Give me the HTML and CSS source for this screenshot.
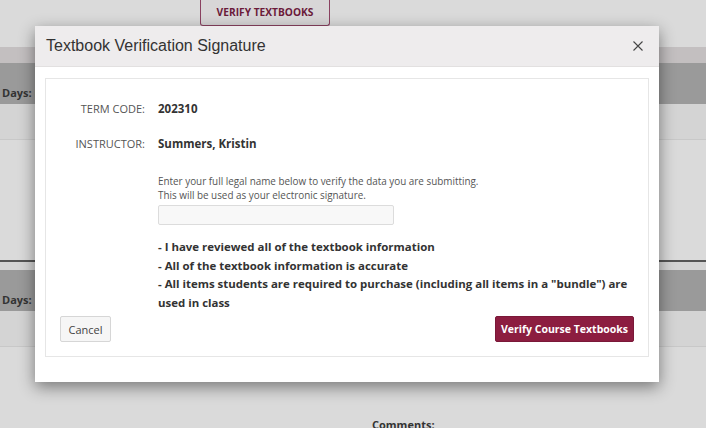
FILE: index.html
```html
<!DOCTYPE html>
<html>
<head>
<meta charset="utf-8">
<link rel="stylesheet" href="styles.css">
</head>
<body>
<div class="page">
  <div class="toolbar"><button class="verify-top">VERIFY TEXTBOOKS</button></div>
  <div class="band band-tint"></div>
  <div class="band band-dark"><span class="days">Days: I</span></div>
  <div class="band band-light"></div>
  <div class="band band-gap"></div>
  <div class="band band-rule"></div>
  <div class="band band-light short"></div>
  <div class="band band-dark"><span class="days">Days:</span></div>
  <div class="band band-light"></div>
  <div class="band band-bottom"><span class="comments">Comments:</span></div>
</div>

<div class="modal">
  <div class="modal-header">
    <h4 class="modal-title">Textbook Verification Signature</h4>
    <span class="close">
      <svg width="12" height="12" viewBox="0 0 12 12"><path d="M1.5 1.5L10.5 10.5M10.5 1.5L1.5 10.5" stroke="#444" stroke-width="1.1" fill="none"/></svg>
    </span>
  </div>
  <div class="modal-body">
    <div class="panel">
      <div class="grid">
        <div class="label">TERM CODE:</div>
        <div class="value">202310</div>
        <div class="label">INSTRUCTOR:</div>
        <div class="value">Summers, Kristin</div>
      </div>
      <div class="sign">
        <p class="hint">Enter your full legal name below to verify the data you are submitting.<br>This will be used as your electronic signature.</p>
        <input class="sig-input" type="text">
        <p class="terms">- I have reviewed all of the textbook information<br>- All of the textbook information is accurate<br>- All items students are required to purchase (including all items in a "bundle") are<br>used in class</p>
      </div>
      <div class="actions">
        <button class="btn btn-cancel">Cancel</button>
        <button class="btn btn-primary">Verify Course Textbooks</button>
      </div>
    </div>
  </div>
</div>
</body>
</html>
```

FILE: styles.css
```css
* { box-sizing: border-box; }
html, body { margin: 0; padding: 0; }
body {
  width: 706px;
  height: 428px;
  overflow: hidden;
  background: #dadada;
  font-family: "Open Sans", "Segoe UI", sans-serif;
  color: #333;
  position: relative;
}
.page { display: flex; flex-direction: column; }
.toolbar { height: 47px; display: flex; padding-left: 200px; align-items: flex-start; }
.verify-top {
  margin-top: -1px;
  width: 130px;
  height: 27px;
  background: #d8d6d7;
  border: 1px solid #8a4060;
  border-top: none;
  border-radius: 0 0 3px 3px;
  color: #6b1a3a;
  font-family: "Open Sans", sans-serif;
  font-weight: 700;
  font-size: 10.2px;
  padding: 0;
  white-space: nowrap;
}
.band { width: 100%; }
.band-tint { height: 16px; background: #c3bfc0; }
.band-dark { height: 41px; background: #9a9a9a; display: flex; align-items: center; }
.band-light { height: 36px; background: #d4d4d4; border-bottom: 1px solid #c8c8c8; }
.band-gap { height: 120px; background: #dadada; }
.band-rule { height: 2px; background: #555; }
.band-light.short { height: 8px; border-bottom: none; }
.band-bottom { height: 90px; background: #dadada; position: relative; }
.days { font-weight: 700; font-size: 11px; color: #333; padding-left: 2px; padding-top: 18px; }
.comments { position: absolute; left: 372px; top: 70px; font-size: 11px; font-weight: 700; color: #333; }

.modal {
  position: absolute;
  left: 35px;
  top: 26px;
  width: 624px;
  height: 356px;
  background: #fff;
  box-shadow: 0 5px 15px rgba(0,0,0,0.45);
  display: flex;
  flex-direction: column;
}
.modal-header {
  height: 41px;
  background: #eeeced;
  border-bottom: 1px solid #e2e0e0;
  display: flex;
  align-items: center;
  justify-content: space-between;
  padding: 0 15px 0 11px;
}
.modal-title {
  margin: 0;
  font-family: "Liberation Sans", Arial, sans-serif;
  font-weight: 400;
  font-size: 16px;
  color: #333;
}
.close { display: flex; width: 12px; height: 12px; }
.modal-body { padding: 11px 10px 24px; }
.panel {
  border: 1px solid #e6e6e6;
  padding: 20px 14px 14px;
  background: #fff;
}
.grid {
  display: grid;
  grid-template-columns: 85px 1fr;
  column-gap: 13px;
  row-gap: 15px;
}
.label {
  text-align: right;
  font-size: 11px;
  color: #555;
  line-height: 20px;
}
.value {
  font-size: 11.5px;
  font-weight: 700;
  line-height: 20px;
  color: #333;
}
.sign { padding-left: 98px; margin-top: 20px; }
.hint {
  margin: 0;
  font-size: 9.9px;
  line-height: 14px;
  color: #555;
}
.sig-input {
  display: block;
  margin-top: 3px;
  width: 236px;
  height: 20px;
  background: #f8f8f8;
  border: 1px solid #dcdcdc;
  border-radius: 2px;
}
.terms {
  margin: 13px 0 0;
  font-size: 11.45px;
  font-weight: 700;
  line-height: 18.5px;
  color: #333;
  white-space: nowrap;
}
.actions {
  margin-top: 4px;
  display: flex;
  justify-content: space-between;
}
.btn {
  height: 26px;
  border-radius: 2px;
  font-family: "Open Sans", sans-serif;
  font-size: 11px;
  padding: 0;
  white-space: nowrap;
}
.btn-cancel {
  width: 51px;
  background: #f6f6f6;
  border: 1px solid #d6d6d6;
  color: #444;
}
.btn-primary {
  width: 139px;
  background: #8c1d40;
  border: 1px solid #7a1838;
  color: #fff;
  font-weight: 700;
  font-size: 10.5px;
}
```
